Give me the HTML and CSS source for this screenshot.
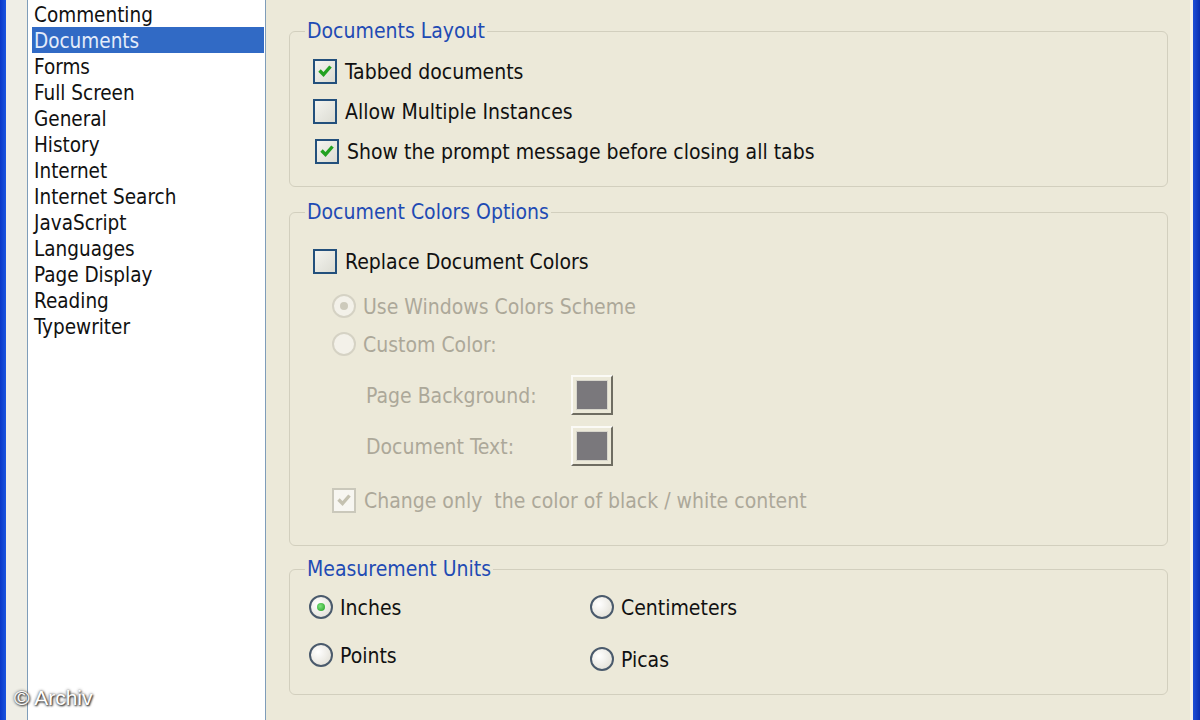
FILE: index.html
```html
<!DOCTYPE html>
<html lang="en">
  <head>
    <meta charset="UTF-8" />
    <meta name="viewport" content="width=device-width, initial-scale=1.0" />
    <title>Preferences - Documents</title>
    <link rel="stylesheet" href="styles.css">
  </head>
  <body>
    <div class="frame-edge left"></div>
    <div class="side-gap"></div>
    <ul class="categories">
      <li>Commenting</li>
      <li class="selected">Documents</li>
      <li>Forms</li>
      <li>Full Screen</li>
      <li>General</li>
      <li>History</li>
      <li>Internet</li>
      <li>Internet Search</li>
      <li>JavaScript</li>
      <li>Languages</li>
      <li>Page Display</li>
      <li>Reading</li>
      <li>Typewriter</li>
    </ul>

    <div class="panel">
      <fieldset class="group layout">
        <legend>Documents Layout</legend>
        <label class="row check">
          <span class="box on">
            <svg viewBox="0 0 20 20"><path d="M4.5 9.5 L8.5 13.5 L15.5 5.5" /></svg>
          </span>
          <span class="txt">Tabbed documents</span>
        </label>
        <label class="row check">
          <span class="box"></span>
          <span class="txt">Allow Multiple Instances</span>
        </label>
        <label class="row check nudge">
          <span class="box on">
            <svg viewBox="0 0 20 20"><path d="M4.5 9.5 L8.5 13.5 L15.5 5.5" /></svg>
          </span>
          <span class="txt">Show the prompt message before closing all tabs</span>
        </label>
      </fieldset>

      <fieldset class="group colors">
        <legend>Document Colors Options</legend>
        <label class="row check replace">
          <span class="box"></span>
          <span class="txt">Replace Document Colors</span>
        </label>
        <label class="row radio-row disabled windows">
          <span class="radio on"></span>
          <span class="txt">Use Windows Colors Scheme</span>
        </label>
        <label class="row radio-row disabled">
          <span class="radio"></span>
          <span class="txt">Custom Color:</span>
        </label>
        <div class="row color-row disabled page-bg">
          <span class="txt color-label">Page Background:</span>
          <span class="swatch-btn"><span class="swatch"></span></span>
        </div>
        <div class="row color-row disabled doc-text">
          <span class="txt color-label">Document Text:</span>
          <span class="swatch-btn"><span class="swatch"></span></span>
        </div>
        <label class="row check disabled only-bw">
          <span class="box on">
            <svg viewBox="0 0 20 20"><path d="M4.5 9.5 L8.5 13.5 L15.5 5.5" /></svg>
          </span>
          <span class="txt">Change only&nbsp; the color of black / white content</span>
        </label>
      </fieldset>

      <fieldset class="group units">
        <legend>Measurement Units</legend>
        <div class="unit-grid">
          <div class="unit-col">
            <label class="row radio-row"><span class="radio on"></span><span class="txt">Inches</span></label>
            <label class="row radio-row second"><span class="radio"></span><span class="txt">Points</span></label>
          </div>
          <div class="unit-col">
            <label class="row radio-row"><span class="radio"></span><span class="txt">Centimeters</span></label>
            <label class="row radio-row second low"><span class="radio"></span><span class="txt">Picas</span></label>
          </div>
        </div>
      </fieldset>
    </div>

    <div class="frame-edge right"></div>
    <div class="credit">© Archiv</div>
  </body>
</html>
```

FILE: styles.css
```css
* {
  box-sizing: border-box;
  margin: 0;
  padding: 0;
}
body {
  display: flex;
  width: 1200px;
  height: 720px;
  overflow: hidden;
  background-color: #ece9d9;
  font-family: 'DejaVu Sans Condensed', 'DejaVu Sans', sans-serif;
  font-stretch: condensed;
  font-size: 21px;
  color: #111;
  position: relative;
}
.frame-edge {
  flex: none;
  height: 100%;
}
.frame-edge.left {
  width: 6px;
  background: linear-gradient(to right, #0836c8, #1a55e0);
}
.frame-edge.right {
  width: 10px;
  border-left: 3px solid #f4f2ea;
  background: linear-gradient(to right, #1d4fd8, #0a2fb0);
}
.side-gap {
  flex: none;
  width: 21px;
  background-color: #efeee6;
}
.categories {
  flex: none;
  width: 239px;
  height: 100%;
  list-style: none;
  background-color: #fff;
  border-left: 1px solid #7f9db9;
  border-right: 1px solid #7f9db9;
  padding: 1px 1px 0 4px;
  font-size: 20.5px;
}
.categories li {
  height: 26px;
  line-height: 28px;
  padding-left: 2px;
  white-space: nowrap;
}
.categories li.selected {
  background-color: #316ac5;
  color: #e4ecfa;
}
.panel {
  flex: 1;
  padding: 19px 22px 0 23px;
}
.group {
  min-width: 0;
  border: 1px solid #d2cfbe;
  border-radius: 6px;
  padding: 0 10px 0 23px;
}
.group legend {
  margin-left: -8px;
  padding: 0 2px;
  line-height: 24px;
  color: #1f4bb4;
}
.layout {
  padding-top: 8px;
  padding-bottom: 15px;
}
.colors {
  margin-top: 13px;
  padding-top: 17px;
  padding-bottom: 25px;
}
.units {
  margin-top: 11px;
  padding-top: 6px;
  padding-bottom: 15px;
}
.row {
  display: flex;
  align-items: center;
  height: 40px;
  white-space: nowrap;
}
.txt {
  padding-top: 2px;
}
.check {
  gap: 8px;
}
.check.nudge {
  margin-left: 2px;
}
.box {
  flex: none;
  width: 24px;
  height: 25px;
  border: 2px solid #23507c;
  background: linear-gradient(135deg, #f4f4ef, #dcdcd3);
  display: flex;
  align-items: center;
  justify-content: center;
}
.box svg {
  width: 20px;
  height: 20px;
}
.box svg path {
  fill: none;
  stroke: #21a121;
  stroke-width: 3.4;
}
.radio-row {
  gap: 7px;
}
.radio {
  flex: none;
  width: 24px;
  height: 24px;
  border-radius: 50%;
  border: 2px solid #4a5a6c;
  background: radial-gradient(circle at 35% 35%, #ffffff, #dedbd0);
  display: flex;
  align-items: center;
  justify-content: center;
}
.radio.on::after {
  content: '';
  width: 8px;
  height: 8px;
  border-radius: 50%;
  background: radial-gradient(circle at 40% 40%, #7fe27f, #1e9e1e);
}
.disabled {
  color: #aca899;
}
.disabled .box {
  border-color: #cac8bb;
  background: #f7f6f1;
}
.disabled .box svg path {
  stroke: #c4c1b0;
}
.disabled .radio {
  border-color: #d5d2c4;
  background: #f3f1e9;
}
.disabled .radio.on::after {
  background: #cdcabb;
}
.windows {
  margin-left: 19px;
  margin-top: 6px;
  height: 38px;
}
.windows + .radio-row {
  margin-left: 19px;
  height: 38px;
}
.color-row {
  margin-left: 53px;
}
.page-bg {
  margin-top: 12px;
}
.doc-text {
  margin-top: 11px;
}
.color-label {
  width: 205px;
}
.swatch-btn {
  width: 42px;
  height: 40px;
  border: 2px solid;
  border-color: #fbfaf6 #6f6d62 #6f6d62 #fbfaf6;
  padding: 3px;
}
.swatch {
  display: block;
  width: 100%;
  height: 100%;
  background-color: #7a787c;
  border: 1px solid #d8d6cc;
}
.only-bw {
  margin-left: 19px;
  margin-top: 14px;
}
.unit-grid {
  display: grid;
  grid-template-columns: 281px 1fr;
  margin-left: -4px;
}
.unit-col .second {
  margin-top: 8px;
}
.unit-col .second.low {
  margin-top: 12px;
}
.credit {
  position: absolute;
  left: 14px;
  bottom: 10px;
  font-family: 'Liberation Sans', sans-serif;
  font-stretch: normal;
  font-size: 21px;
  color: #fff;
  text-shadow: 0 0 3px #333, 1px 1px 2px #222;
}
```
